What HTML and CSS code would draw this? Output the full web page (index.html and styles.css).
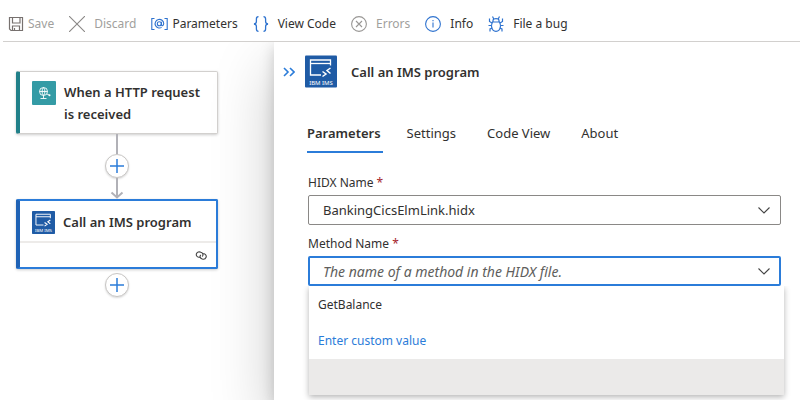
FILE: index.html
```html
<!DOCTYPE html>
<html lang="en">
<head>
<meta charset="utf-8">
<meta name="viewport" content="width=device-width, initial-scale=1">
<title>Workflow designer</title>
<link rel="stylesheet" href="styles.css">
</head>
<body>
<svg class="defs" aria-hidden="true">
  <symbol id="ims" viewBox="0 0 32 32">
    <rect width="32" height="32" rx="1" fill="#1f5ba5"/>
    <g fill="none" stroke="#fff" stroke-width="1.3">
      <path d="M16 19.500H5.500V4.500H25.500V10"/>
      <path d="M5.500 8H25.500"/>
      <path d="M17.500 16L21 18.500L17.500 21M25.500 12.500L22 15L25.500 18" stroke-width="1.500"/>
    </g>
    <text class="ims-text" x="16" y="29" text-anchor="middle">IBM IMS</text>
  </symbol>
  <symbol id="plus" viewBox="0 0 14 14">
    <path d="M7 0V14M0 7H14" fill="none" stroke="#2b7cd9" stroke-width="1.500"/>
  </symbol>
  <symbol id="chevron" viewBox="0 0 12 7">
    <path d="M.5 .5L6 6L11.500 .5" fill="none" stroke="#444" stroke-width="1.100"/>
  </symbol>
</svg>

<header class="toolbar">
  <button class="tool tight" disabled>
    <svg viewBox="0 0 16 16"><g fill="none" stroke="#77716f" stroke-width="1.200"><path d="M1.500 1.500H14.500V14.500H3L1.500 13Z"/><path d="M4.500 1.500V7H12V1.500"/><path d="M4.500 14.500V10H11.500V14.500M6.500 12V14.500"/></g></svg>
    <span>Save</span>
  </button>
  <button class="tool" disabled>
    <svg viewBox="0 0 16 16"><path d="M0 0L16 16M16 0L0 16" fill="none" stroke="#8a8886" stroke-width="1.100"/></svg>
    <span>Discard</span>
  </button>
  <button class="tool tight">
    <svg viewBox="0 0 17 16" class="wide"><g fill="none" stroke="#2f73cf" stroke-width="1.100"><path d="M3.500 2.500H.8V13.500H3.500M13.500 2.500H16.200V13.500H13.500"/><circle cx="8.300" cy="7.800" r="2"/><path d="M10.400 5.700V8.500C10.400 10.400 12.700 10 12.700 7.500A4.300 4.300 0 1 0 10.600 11.400"/></g></svg>
    <span>Parameters</span>
  </button>
  <button class="tool">
    <svg viewBox="0 0 16 16"><path d="M5.500 .7C3.500 .7 3.400 1.500 3.400 3V5.500C3.400 7.300 2.600 7.800 1 8C2.600 8.200 3.400 8.700 3.400 10.500V13C3.400 14.500 3.500 15.300 5.500 15.300M10.500 .7C12.500 .7 12.600 1.500 12.600 3V5.500C12.600 7.300 13.400 7.800 15 8C13.400 8.200 12.600 8.700 12.600 10.500V13C12.600 14.500 12.500 15.300 10.500 15.300" fill="none" stroke="#2f73cf" stroke-width="1.300"/></svg>
    <span>View Code</span>
  </button>
  <button class="tool" disabled>
    <svg viewBox="0 0 16 16"><g fill="none" stroke="#999795" stroke-width="1.100"><circle cx="8" cy="8" r="7.400"/><path d="M5 5L11 11M11 5L5 11"/></g></svg>
    <span>Errors</span>
  </button>
  <button class="tool">
    <svg viewBox="0 0 16 16"><g fill="none" stroke="#2f73cf" stroke-width="1.100"><circle cx="8" cy="8" r="7.400"/><path d="M8 6.500V11.500M8 4V5.200"/></g></svg>
    <span>Info</span>
  </button>
  <button class="tool">
    <svg viewBox="0 0 16 16"><g fill="none" stroke="#2f73cf" stroke-width="1.200"><path d="M4.500 6H11.500C12.500 8 12.600 9.500 12.400 11C12 13.700 10.300 15.300 8 15.300S4 13.700 3.600 11C3.400 9.500 3.500 8 4.500 6Z"/><path d="M5 6V4.500C5 2 11 2 11 4.500V6M5.800 3L4.500 .5M10.200 3L11.500 .5M4 7L1.500 5.500V2.500M12 7L14.500 5.500V2.500M3.500 9.500H.5M12.500 9.500H15.500M4.500 12L2 13V15.500M11.500 12L14 13V15.500"/></g></svg>
    <span>File a bug</span>
  </button>
</header>

<div class="workspace">
  <main class="canvas">
    <article class="card trigger">
      <div class="card-head">
        <svg class="card-icon" viewBox="0 0 24 24"><rect width="24" height="24" rx="1" fill="#349ba5"/><g fill="none" stroke="#fff" stroke-width=".9"><circle cx="11.500" cy="10.500" r="4"/><path d="M7.500 10.500H15.500M11.500 6.500C9.600 8.500 9.600 12.500 11.500 14.500M11.500 6.500C13.400 8.500 13.400 12.500 11.500 14.500M11.500 14.500V17.500M8.500 17.500H14.500M15 13L17 14"/></g><circle cx="17.500" cy="14.200" r="1" fill="#fff"/></svg>
        <h2>When a HTTP request is received</h2>
      </div>
    </article>
    <div class="line"></div>
    <button class="add" aria-label="Insert a step"><svg><use href="#plus"/></svg></button>
    <svg class="arrow" viewBox="0 0 14 21"><path d="M7 0V19M1.500 14.500L7 19.500L12.500 14.500" fill="none" stroke="#b1b1b7" stroke-width="2"/></svg>
    <article class="card action">
      <div class="card-head">
        <svg class="card-icon"><use href="#ims"/></svg>
        <h2>Call an IMS program</h2>
      </div>
      <div class="card-foot">
        <svg class="link" viewBox="0 0 13 9"><g fill="none" stroke="#444" stroke-width="1.100"><path d="M5.500 6.300H3.800A3 2.700 0 1 1 5.800 1.300C8 2 8.700 4 7.200 5.500"/><path d="M7.500 2.800H9.200A3 2.700 0 1 1 7.200 8C5 7.300 4.300 5.300 5.800 3.800"/></g></svg>
      </div>
    </article>
    <button class="add last" aria-label="Add a step"><svg><use href="#plus"/></svg></button>
  </main>

  <aside class="panel">
    <div class="panel-head">
      <button class="collapse" aria-label="Collapse panel"><svg viewBox="0 0 12 10"><path d="M1 1L5 5L1 9M7 1L11 5L7 9" fill="none" stroke="#2b7cd9" stroke-width="1.600"/></svg></button>
      <svg class="panel-icon"><use href="#ims"/></svg>
      <h1>Call an IMS program</h1>
    </div>
    <nav class="tabs">
      <button class="tab current">Parameters</button>
      <button class="tab">Settings</button>
      <button class="tab">Code View</button>
      <button class="tab">About</button>
    </nav>
    <form class="fields">
      <label for="hidx">HIDX Name <span class="req">*</span></label>
      <div class="box">
        <select id="hidx"><option>BankingCicsElmLink.hidx</option></select>
        <svg class="chevron"><use href="#chevron"/></svg>
      </div>
      <label for="method">Method Name <span class="req">*</span></label>
      <div class="box active">
        <select id="method"><option>The name of a method in the HIDX file.</option></select>
        <svg class="chevron"><use href="#chevron"/></svg>
        <div class="menu">
          <button type="button">GetBalance</button>
          <button type="button" class="custom">Enter custom value</button>
          <div class="menu-foot"></div>
        </div>
      </div>
    </form>
  </aside>
</div>
</body>
</html>
```
FILE: styles.css
```css
* { box-sizing: border-box; }

body {
  margin: 0;
  min-height: 100vh;
  display: flex;
  flex-direction: column;
  background: #fff;
  color: #323130;
  font-family: "Noto Sans", "Open Sans", sans-serif;
  font-size: 13px;
}

button, select { font: inherit; color: inherit; }
button { padding: 0; border: 0; background: none; }
h1, h2 { margin: 0; font-weight: 600; }
svg { display: block; flex: none; }
.defs { position: absolute; width: 0; height: 0; }
.ims-text { font-size: 6px; fill: #fff; }

.toolbar {
  display: flex;
  gap: 15px;
  height: 42px;
  margin-left: 3px;
  padding: 6px 5px 0;
  border-bottom: 1px solid #d2d0ce;
  font-size: 12px;
}
.tool { display: flex; align-items: center; gap: 9px; white-space: nowrap; }
.tool.tight { gap: 4px; }
.tool svg { width: 16px; height: 16px; }
.tool svg.wide { width: 17px; }
.tool:disabled { color: #a19f9d; }

.workspace { flex: 1; display: flex; overflow: hidden; }

.canvas {
  flex: 0 0 274px;
  display: flex;
  flex-direction: column;
  align-items: center;
  padding: 29px 56px 0 16px;
}

.card {
  width: 100%;
  border: 1px solid #d2d0ce;
  border-radius: 2px;
  background: #fff;
  box-shadow: 0 1px 3px rgba(0, 0, 0, .2);
}
.trigger { border-left: 4px solid #218089; }
.action {
  border: 2px solid #2b7cd9;
  border-left: 4px solid #1f62b5;
}
.card-head { display: flex; align-items: flex-start; gap: 8px; padding: 9px 12px 8px; }
.card-icon { width: 24px; height: 24px; }
.card h2 { font-size: 13px; line-height: 22px; }
.action .card-head { padding-top: 10px; padding-bottom: 7px; border-bottom: 2px solid #edebe9; }
.action .card-icon { width: 23px; height: 23px; }
.card-foot { display: flex; justify-content: flex-end; align-items: center; height: 24px; padding-right: 8px; }
.link { width: 13px; height: 9px; }

.line { width: 2px; height: 20px; background: #b1b1b7; }
.add {
  display: grid;
  place-items: center;
  width: 24px;
  height: 24px;
  border: 1px solid #c8c6c4;
  border-radius: 50%;
  background: #fff;
  box-shadow: 0 1px 2px rgba(0, 0, 0, .15);
}
.add svg { width: 14px; height: 14px; }
.add.last { margin-top: 4px; }
.arrow { width: 14px; height: 21px; }

.panel {
  flex: 1;
  min-width: 0;
  padding: 13px 19px 0 9px;
  background: #fff;
  box-shadow: 0 26px 58px rgba(0, 0, 0, .22), 0 5px 14px rgba(0, 0, 0, .18);
}
.panel-head { display: flex; align-items: center; }
.collapse svg { width: 12px; height: 10px; }
.panel-icon { width: 32px; height: 33px; margin: 0 14px 0 10px; }
.panel h1 { font-size: 13px; }

.tabs { display: flex; gap: 31px; margin: 28px 0 0 24px; }
.tab { height: 37px; padding-bottom: 1px; border-bottom: 2px solid transparent; }
.tab.current { margin-right: -7px; padding-right: 2px; border-color: #2b7cd9; font-weight: 600; }

.fields { margin: 20px 0 0 25px; }
.fields label { display: block; height: 22px; line-height: 20px; font-size: 12px; }
.req { color: #a4262c; }
.box { position: relative; margin-bottom: 9px; }
.box select {
  display: block;
  width: 100%;
  height: 30px;
  padding: 0 32px 0 14px;
  border: 1px solid #8a8886;
  border-radius: 2px;
  background: #fff;
  appearance: none;
}
.active select {
  padding-left: 13px;
  border: 2px solid #2b7cd9;
  color: #605e5c;
  font-size: 14px;
  font-style: italic;
  outline: none;
}
.chevron { position: absolute; top: 12px; right: 11px; width: 12px; height: 7px; pointer-events: none; }

.menu {
  position: absolute;
  top: 100%;
  left: 1px;
  right: -3px;
  background: #fff;
  box-shadow: 0 2px 6px rgba(0, 0, 0, .3);
  clip-path: inset(0 -8px -8px -8px);
  font-size: 12px;
}
.menu button { display: block; width: 100%; height: 36px; padding-left: 9px; text-align: left; }
.menu .custom { height: 37px; color: #2b7cd9; }
.menu-foot { height: 36px; background: #ebeae9; }
```
